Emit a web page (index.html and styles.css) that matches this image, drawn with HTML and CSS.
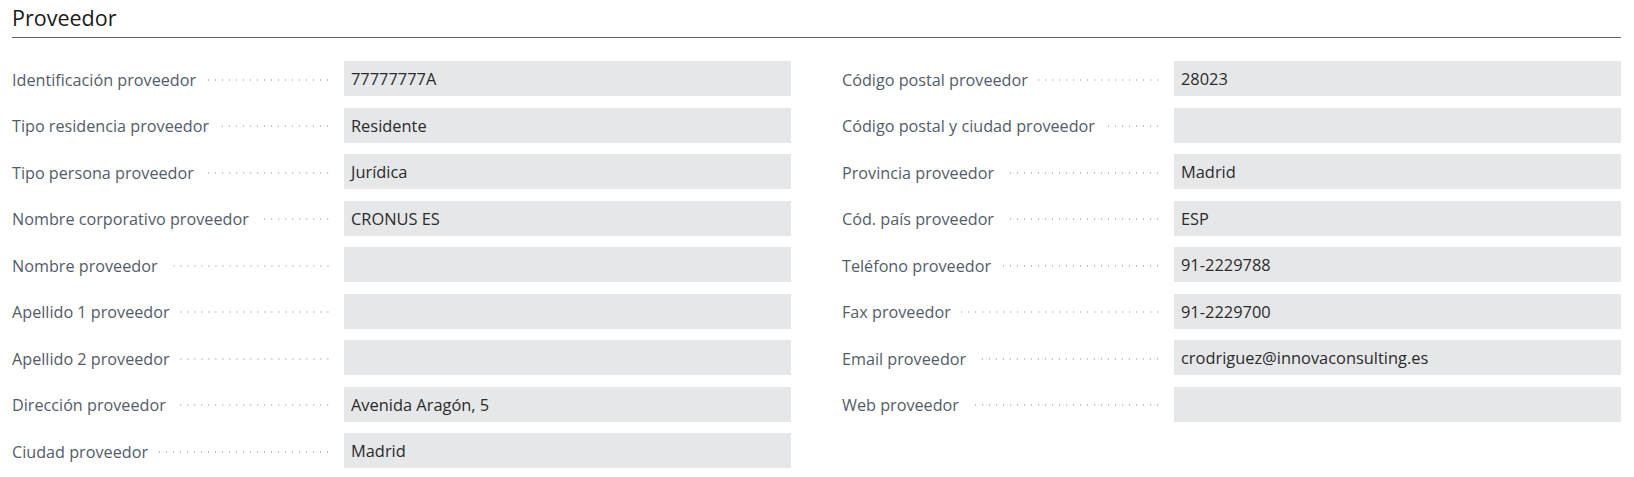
FILE: index.html
```html
<!DOCTYPE html>
<html lang="es">
<head>
<meta charset="utf-8">
<title>Proveedor</title>
<link rel="stylesheet" href="styles.css">
</head>
<body>
<section class="page">
  <div class="header"><h2 class="title">Proveedor</h2></div>
  <div class="form">
    <div class="col">
      <div class="row"><div class="lbl"><span>Identificación proveedor</span><i class="dots"></i></div><div class="val">77777777A</div></div>
      <div class="row"><div class="lbl"><span>Tipo residencia proveedor</span><i class="dots"></i></div><div class="val">Residente</div></div>
      <div class="row"><div class="lbl"><span>Tipo persona proveedor</span><i class="dots"></i></div><div class="val">Jurídica</div></div>
      <div class="row"><div class="lbl"><span>Nombre corporativo proveedor</span><i class="dots"></i></div><div class="val">CRONUS ES</div></div>
      <div class="row"><div class="lbl"><span>Nombre proveedor</span><i class="dots"></i></div><div class="val"></div></div>
      <div class="row"><div class="lbl"><span>Apellido 1 proveedor</span><i class="dots"></i></div><div class="val"></div></div>
      <div class="row"><div class="lbl"><span>Apellido 2 proveedor</span><i class="dots"></i></div><div class="val"></div></div>
      <div class="row"><div class="lbl"><span>Dirección proveedor</span><i class="dots"></i></div><div class="val">Avenida Aragón, 5</div></div>
      <div class="row"><div class="lbl"><span>Ciudad proveedor</span><i class="dots"></i></div><div class="val">Madrid</div></div>
    </div>
    <div class="col">
      <div class="row"><div class="lbl"><span>Código postal proveedor</span><i class="dots"></i></div><div class="val">28023</div></div>
      <div class="row"><div class="lbl"><span>Código postal y ciudad proveedor</span><i class="dots"></i></div><div class="val"></div></div>
      <div class="row"><div class="lbl"><span>Provincia proveedor</span><i class="dots"></i></div><div class="val">Madrid</div></div>
      <div class="row"><div class="lbl"><span>Cód. país proveedor</span><i class="dots"></i></div><div class="val">ESP</div></div>
      <div class="row"><div class="lbl"><span>Teléfono proveedor</span><i class="dots"></i></div><div class="val">91-2229788</div></div>
      <div class="row"><div class="lbl"><span>Fax proveedor</span><i class="dots"></i></div><div class="val">91-2229700</div></div>
      <div class="row"><div class="lbl"><span>Email proveedor</span><i class="dots"></i></div><div class="val">crodriguez@innovaconsulting.es</div></div>
      <div class="row"><div class="lbl"><span>Web proveedor</span><i class="dots"></i></div><div class="val"></div></div>
    </div>
  </div>
</section>
</body>
</html>
```
FILE: styles.css
```css
html, body {
  margin: 0;
  padding: 0;
  background: #ffffff;
}
body {
  font-family: "Open Sans", "Noto Sans", "Liberation Sans", sans-serif;
  color: #212121;
}
.page {
  padding: 0 13px 0 12px;
}
.header {
  padding-top: 3px;
  height: 38px;
  box-sizing: border-box;
  border-bottom: 1px solid #5b616d;
}
.title {
  margin: 0;
  font-size: 21.5px;
  line-height: 30px;
  font-weight: 400;
  color: #1a1a1a;
}
.form {
  display: grid;
  grid-template-columns: 1fr 1fr;
  column-gap: 51px;
  margin-top: 23px;
}
.col {
  display: flex;
  flex-direction: column;
  gap: 11.5px;
}
.row {
  display: grid;
  grid-template-columns: 332px 1fr;
  height: 35px;
}
.lbl {
  display: flex;
  align-items: center;
  font-size: 16.2px;
  color: #535c6a;
  white-space: nowrap;
  padding-top: 2px;
}
.dots {
  flex: 1;
  height: 2px;
  margin: 0 13px 0 10px;
  background-image: radial-gradient(circle, #bcc0c6 0.9px, transparent 1.1px);
  background-size: 7px 2px;
  background-repeat: repeat-x;
  background-position: right center;
}
.val {
  background: #e6e7e9;
  font-size: 16.4px;
  line-height: 36px;
  padding: 0 7px;
  color: #2b2b2b;
  white-space: nowrap;
  overflow: hidden;
}
```
